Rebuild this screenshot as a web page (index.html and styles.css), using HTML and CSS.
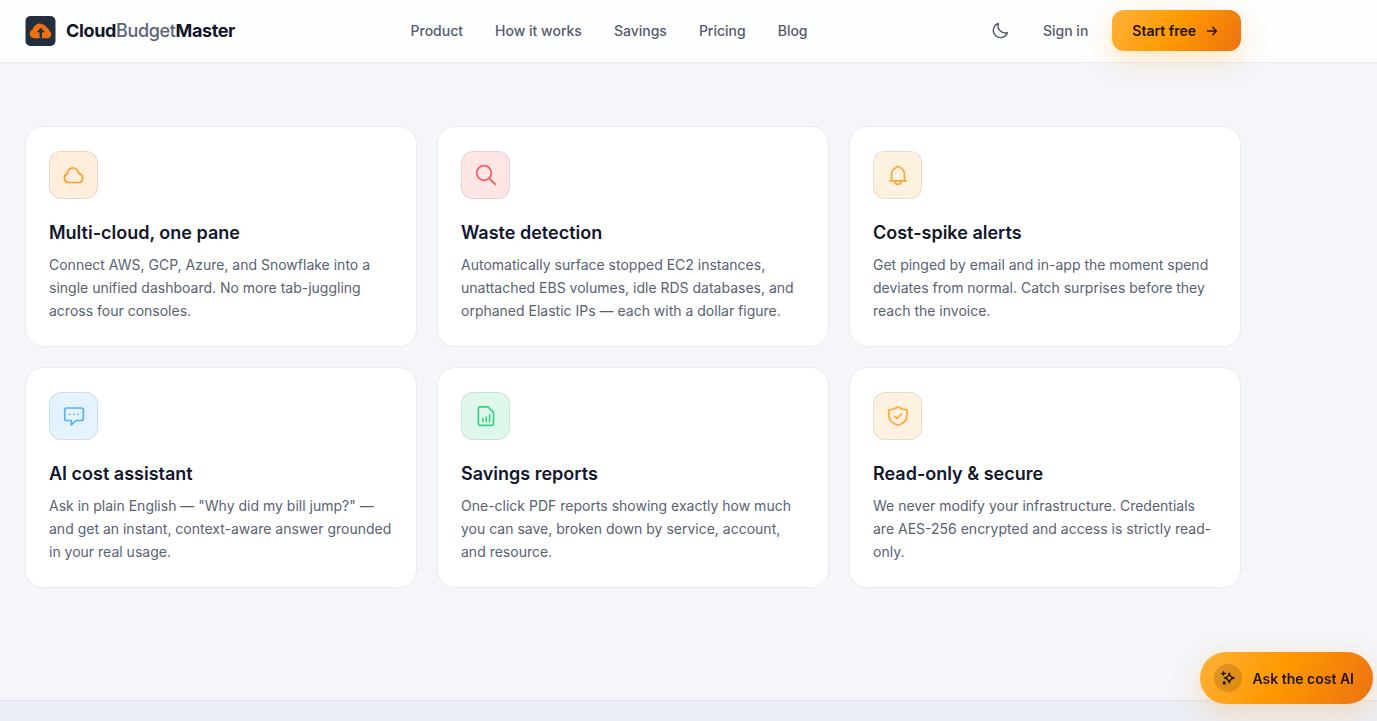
FILE: index.html
```html
<!DOCTYPE html>
<html lang="en">
<head>
<meta charset="utf-8">
<meta name="viewport" content="width=device-width, initial-scale=1">
<title>CloudBudgetMaster</title>
<link rel="stylesheet" href="styles.css">
</head>
<body>
<header class="site-header">
  <div class="container header-row">
    <a class="brand" href="#">
      <svg class="brand-mark" viewBox="0 0 30 30" aria-hidden="true">
        <rect width="30" height="30" rx="5" fill="#232f3e"/>
        <path d="M8.500 22.300a4.600 4.600 0 0 1-1.200-8.900 4.300 4.300 0 0 1 2.500-3.900 5.300 5.300 0 0 1 7.600-.9 4.300 4.300 0 0 1 3.700 3 4.400 4.400 0 0 1 2.700 3.400 3.900 3.900 0 0 1-1.800 7.300Z" fill="#ec7211"/>
        <path d="M15.300 11.800l4.200 4.400h-3v6.200h-2.400v-6.200h-3Z" fill="#232f3e"/>
      </svg>
      <span class="brand-name">Cloud<span class="brand-light">Budget</span>Master</span>
    </a>
    <nav class="nav" aria-label="Main">
      <a href="#">Product</a>
      <a href="#">How it works</a>
      <a href="#">Savings</a>
      <a href="#">Pricing</a>
      <a href="#">Blog</a>
    </nav>
    <div class="actions">
      <button class="theme-toggle" type="button" aria-label="Toggle dark mode">
        <svg viewBox="0 0 24 24" aria-hidden="true"><path d="M9.400 3.200a9.100 9.100 0 1 0 11.400 11.400A9 9 0 0 1 9.400 3.200Z"/></svg>
      </button>
      <a class="sign-in" href="#">Sign in</a>
      <a class="start" href="#">Start free
        <svg viewBox="0 0 12 12" aria-hidden="true"><path d="M1.500 6h9M6.800 2.300 10.500 6 6.800 9.700"/></svg>
      </a>
    </div>
  </div>
</header>

<main class="features">
  <div class="container grid">
    <article class="card">
      <div class="tile orange">
        <svg viewBox="0 0 24 24" aria-hidden="true"><path d="M6.800 19.500a4.400 4.400 0 0 1-1.300-8.600A5.400 5.400 0 0 1 16 8.700a3 3 0 0 1 .9 2 4.500 4.500 0 0 1 .3 8.800Z"/></svg>
      </div>
      <h3>Multi-cloud, one pane</h3>
      <p>Connect AWS, GCP, Azure, and Snowflake into a single unified dashboard. No more tab-juggling across four consoles.</p>
    </article>
    <article class="card">
      <div class="tile red">
        <svg viewBox="0 0 24 24" aria-hidden="true"><circle cx="10" cy="10" r="7.300"/><path d="m15.300 15.300 6 6"/></svg>
      </div>
      <h3>Waste detection</h3>
      <p>Automatically surface stopped EC2 instances, unattached EBS volumes, idle RDS databases, and orphaned Elastic IPs — each with a dollar figure.</p>
    </article>
    <article class="card">
      <div class="tile amber">
        <svg viewBox="0 0 24 24" aria-hidden="true"><path d="M3.800 17.800h16.400M5.600 17.800V10.800C5.600 7.500 7.800 5.600 10.300 4.500a1.800 1.800 0 0 1 3.400 0c2.500 1.100 4.700 3 4.700 6.300v7M8.800 17.800v.4a3.200 3.200 0 0 0 6.400 0v-.4"/></svg>
      </div>
      <h3>Cost-spike alerts</h3>
      <p>Get pinged by email and in-app the moment spend deviates from normal. Catch surprises before they reach the invoice.</p>
    </article>
    <article class="card">
      <div class="tile blue">
        <svg viewBox="0 0 24 24" aria-hidden="true"><path d="M4.700 4h14.600a2 2 0 0 1 2 2v8.500a2 2 0 0 1-2 2h-5.100L9.400 21v-4.500H4.700a2 2 0 0 1-2-2V6a2 2 0 0 1 2-2Z"/><path class="dots" d="M8 10.300h.01M12 10.300h.01M16 10.300h.01"/></svg>
      </div>
      <h3>AI cost assistant</h3>
      <p>Ask in plain English — "Why did my bill jump?" — and get an instant, context-aware answer grounded in your real usage.</p>
    </article>
    <article class="card">
      <div class="tile green">
        <svg viewBox="0 0 24 24" aria-hidden="true"><path d="M6 2.800h8l5.500 5.500v11.400a1.600 1.600 0 0 1-1.600 1.600H6a1.600 1.600 0 0 1-1.600-1.600V4.400A1.600 1.600 0 0 1 6 2.800Z"/><path class="bars" d="M8.800 17.600v-3.200M12.200 17.600V13M15.600 17.600v-6.800"/></svg>
      </div>
      <h3>Savings reports</h3>
      <p>One-click PDF reports showing exactly how much you can save, broken down by service, account, and resource.</p>
    </article>
    <article class="card">
      <div class="tile gold">
        <svg viewBox="0 0 24 24" aria-hidden="true"><path d="M12 3c2.800 1.800 5.800 2.700 9.200 2.800V11c0 5-3.500 8.300-9.200 10.300C6.300 19.300 2.800 16 2.800 11V5.800C6.200 5.700 9.200 4.800 12 3Z"/><path d="m8.700 12.300 2.400 2.200 4.300-4.500"/></svg>
      </div>
      <h3>Read-only &amp; secure</h3>
      <p>We never modify your infrastructure. Credentials are AES-256 encrypted and access is strictly read-only.</p>
    </article>
  </div>
</main>

<footer class="next-band"></footer>

<button class="ask" type="button">
  <span class="ask-icon">
    <svg viewBox="0 0 16 16" aria-hidden="true"><path d="M9.300 3.100c.5 3.200 1.700 4.400 4.900 4.900-3.200.5-4.400 1.700-4.900 4.900-.5-3.200-1.700-4.400-4.900-4.900 3.200-.5 4.400-1.700 4.900-4.900Z"/><path d="M3.500 1.700v3.600M1.700 3.500h3.600"/><circle cx="4.300" cy="13" r="1"/></svg>
  </span>
  Ask the cost AI
</button>
</body>
</html>
```
FILE: styles.css
```css
* {
  box-sizing: border-box;
}

body {
  margin: 0;
  min-height: 100vh;
  display: flex;
  flex-direction: column;
  background: #f4f6fa;
  color: #12162b;
  font-family: Inter, "Liberation Sans", sans-serif;
}

a {
  color: inherit;
  text-decoration: none;
}

button {
  border: 0;
  font: inherit;
  cursor: pointer;
}

svg {
  fill: none;
  stroke: currentColor;
  stroke-linecap: round;
  stroke-linejoin: round;
}

.container {
  max-width: 1266px;
  padding: 0 25px;
}

.site-header {
  background: #fdfefe;
  border-bottom: 1px solid #e8ebef;
}

.header-row {
  display: flex;
  align-items: center;
  justify-content: space-between;
  padding-top: 10px;
  padding-bottom: 11px;
}

.brand {
  display: flex;
  align-items: center;
  gap: 10px;
}

.brand-mark {
  width: 31px;
  height: 30px;
  stroke: none;
}

.brand-name {
  font-size: 18px;
  font-weight: 700;
  letter-spacing: -0.02em;
}

.brand-light {
  color: #5a6478;
  font-weight: 500;
}

.nav {
  display: flex;
  gap: 32px;
  color: #535b6d;
  font-size: 14px;
  font-weight: 500;
}

.actions {
  display: flex;
  align-items: center;
  gap: 24px;
  color: #535b6d;
  font-size: 14px;
  font-weight: 500;
}

.theme-toggle {
  display: grid;
  place-items: center;
  width: 36px;
  height: 36px;
  padding: 0;
  background: none;
  color: #535b6d;
}

.theme-toggle svg {
  width: 19px;
  height: 19px;
  stroke-width: 1.8;
}

.start {
  display: flex;
  align-items: center;
  gap: 10px;
  height: 41px;
  padding: 0 23px 0 20px;
  border-radius: 12px;
  background: linear-gradient(120deg, #ffb13b 0%, #ff9900 50%, #ec7211 100%);
  box-shadow: 0 8px 28px rgba(255, 153, 0, 0.25);
  color: #231407;
  font-weight: 600;
}

.start svg {
  width: 12px;
  height: 12px;
  stroke-width: 1.5;
}

.features {
  flex: 1;
  padding: 63px 0 112px;
}

.grid {
  display: grid;
  grid-template-columns: repeat(3, 1fr);
  gap: 20px;
}

.card {
  padding: 24px 23px;
  border: 1px solid #e8ebf0;
  border-radius: 18px;
  background: #fff;
}

.tile {
  display: grid;
  place-items: center;
  width: 49px;
  height: 48px;
  border: 1px solid rgba(60, 70, 90, 0.12);
  border-radius: 12px;
}

.tile svg {
  width: 24px;
  height: 24px;
  stroke-width: 1.7;
}

.tile .dots {
  stroke-width: 1.8;
}

.tile .bars {
  stroke-width: 1.6;
}

.orange {
  background: #ffeedb;
  color: #ff9a2e;
}

.red {
  background: #ffe6e6;
  color: #ff5a5a;
}

.amber {
  background: #fef1e0;
  color: #f8a634;
}

.blue {
  background: #e4f3ff;
  color: #55aef7;
}

.green {
  background: #e0f8eb;
  color: #34d186;
}

.gold {
  background: #fff1e0;
  color: #ffa838;
}

.card h3 {
  margin: 21px 0 7px;
  font-size: 18px;
  font-weight: 600;
  line-height: 26px;
}

.card p {
  margin: 0;
  color: #586273;
  font-size: 14px;
  line-height: 23px;
}

.next-band {
  height: 21px;
  border-top: 1px solid #e0e3ea;
  background: #ebeef5;
}

.ask {
  position: fixed;
  right: 4px;
  bottom: 17px;
  display: flex;
  align-items: center;
  gap: 10px;
  height: 52px;
  padding: 0 19px 0 14px;
  border-radius: 26px;
  background: linear-gradient(120deg, #ffb13b 0%, #ff9900 45%, #ec7211 100%);
  box-shadow: 0 8px 28px rgba(255, 153, 0, 0.25);
  color: #231407;
  font-size: 14px;
  font-weight: 600;
}

.ask-icon {
  display: grid;
  place-items: center;
  width: 28px;
  height: 28px;
  border-radius: 50%;
  background: rgba(35, 20, 7, 0.15);
}

.ask-icon svg {
  width: 16px;
  height: 16px;
  stroke-width: 1.3;
}
```
